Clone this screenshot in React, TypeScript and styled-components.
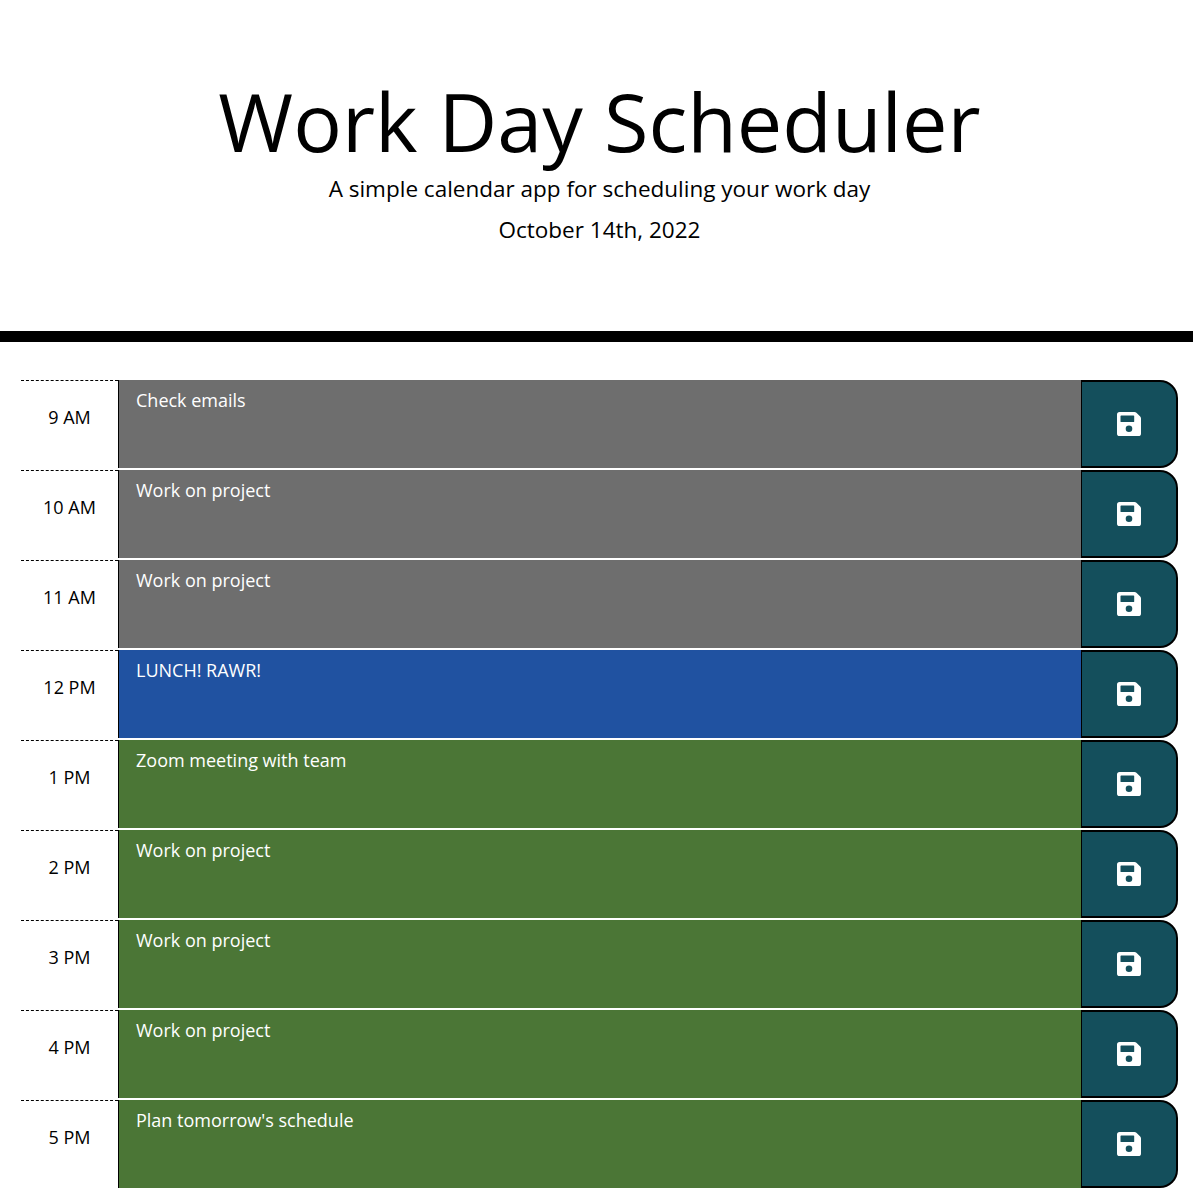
import React from "react";
import styled, { createGlobalStyle } from "styled-components";

const GlobalStyle = createGlobalStyle`
  *, *::before, *::after { box-sizing: border-box; }
  body {
    margin: 0;
    background: #fff;
    color: #000;
    font-family: "Open Sans", "Noto Sans", sans-serif;
    font-size: 18px;
    line-height: 1.5;
    overflow: hidden;
  }
`;

const Header = styled.header`
  height: 342px;
  padding: 72px 0 0 6px;
  border-bottom: 11px solid #000;
  text-align: center;
`;

const Title = styled.h1`
  margin: 0 0 3px;
  font-size: 81px;
  font-weight: 400;
  line-height: 97px;
`;

const Lead = styled.p`
  margin: 0 0 7px;
  font-size: 22.5px;
  font-weight: 400;
  line-height: 34px;
`;

const Schedule = styled.main`
  display: flex;
  flex-direction: column;
  gap: 2px;
  padding: 38px 15px 0 21px;
`;

const TimeBlock = styled.section`
  display: grid;
  grid-template-columns: 97px 1fr 97px;
  height: 88px;
`;

const Hour = styled.div`
  border-top: 1px dashed #000;
  padding-top: 23px;
  text-align: center;
  line-height: 27px;
`;

type Phase = "past" | "present" | "future";

const phaseColors: Record<Phase, string> = {
  past: "#6e6e6e",
  present: "#2052a1",
  future: "#4b7636",
};

const Task = styled.div<{ $phase: Phase }>`
  border-left: 1px solid #000;
  padding: 7px 17px;
  color: #fff;
  background: ${({ $phase }) => phaseColors[$phase]};
  line-height: 27px;
`;

const SaveButton = styled.button`
  display: flex;
  align-items: center;
  justify-content: center;
  padding: 0;
  border: 2px solid #000;
  border-left-width: 1px;
  border-radius: 0 18px 18px 0;
  background: #144f5c;
  color: #fff;
`;

const SaveIcon = () => (
  <svg width="24" height="24" viewBox="0 0 24 24" aria-hidden="true">
    <path
      fill="currentColor"
      fillRule="evenodd"
      d="M2.600 0H17.500Q18.600 0 19.400 .8L23.200 4.600Q24 5.400 24 6.500V21.400Q24 24 21.400 24H2.600Q0 24 0 21.400V2.600Q0 0 2.600 0ZM4.200 3.400Q3.500 3.400 3.500 4.100V9.400Q3.500 10.100 4.200 10.100H16.500Q17.200 10.100 17.200 9.400V4.100Q17.200 3.400 16.500 3.400ZM12 13.500A3.300 3.300 0 1 0 12 20.100A3.300 3.300 0 1 0 12 13.500Z"
    />
  </svg>
);

const entries: { hour: string; task: string; phase: Phase }[] = [
  { hour: "9 AM", task: "Check emails", phase: "past" },
  { hour: "10 AM", task: "Work on project", phase: "past" },
  { hour: "11 AM", task: "Work on project", phase: "past" },
  { hour: "12 PM", task: "LUNCH! RAWR!", phase: "present" },
  { hour: "1 PM", task: "Zoom meeting with team", phase: "future" },
  { hour: "2 PM", task: "Work on project", phase: "future" },
  { hour: "3 PM", task: "Work on project", phase: "future" },
  { hour: "4 PM", task: "Work on project", phase: "future" },
  { hour: "5 PM", task: "Plan tomorrow's schedule", phase: "future" },
];

export default function App() {
  return (
    <>
      <GlobalStyle />
      <Header>
        <Title>Work Day Scheduler</Title>
        <Lead>A simple calendar app for scheduling your work day</Lead>
        <Lead>October 14th, 2022</Lead>
      </Header>
      <Schedule>
        {entries.map(({ hour, task, phase }) => (
          <TimeBlock key={hour}>
            <Hour>{hour}</Hour>
            <Task $phase={phase}>{task}</Task>
            <SaveButton aria-label={`Save ${hour}`}>
              <SaveIcon />
            </SaveButton>
          </TimeBlock>
        ))}
      </Schedule>
    </>
  );
}
